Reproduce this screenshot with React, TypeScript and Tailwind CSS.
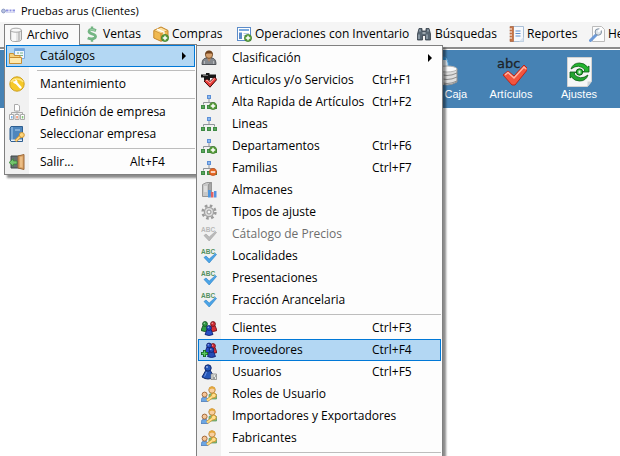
import { ReactNode } from "react"

type IconName =
  | "database" | "dollar" | "box" | "layout" | "binoculars" | "notebook" | "wrenchDoc"
  | "folder" | "wrench" | "company" | "book" | "door"
  | "person" | "articles" | "treeAdd" | "tree" | "treeRemove" | "server" | "gear"
  | "abcGray" | "abc" | "clients" | "suppliers" | "user" | "roles"

const plusBadge = (
  <>
    <circle cx="12" cy="12" r="3.6" fill="#5a9e3c" stroke="#3a7a26" strokeWidth=".7" />
    <path d="M12 9.8v4.4M9.8 12h4.4" stroke="#fff" strokeWidth="1.4" />
  </>
)

const treeBase = (
  <>
    <path d="M8 5v4M2.500 10.500V8.500h11v2" fill="none" stroke="#8f9499" strokeWidth="1" />
    <rect x="6.500" y="1.500" width="3" height="3" fill="#8db9f0" stroke="#5c8fd6" />
    <rect x=".5" y="11.500" width="3" height="3" fill="#58a65a" stroke="#3f8a45" />
    <rect x="6.500" y="11.500" width="3" height="3" fill="#58a65a" stroke="#3f8a45" />
    <rect x="12.500" y="11.500" width="3" height="3" fill="#58a65a" stroke="#3f8a45" />
  </>
)

function Pawn({ fill, dark, x = 0, y = 0 }: { fill: string; dark: string; x?: number; y?: number }) {
  return (
    <g transform={`translate(${x} ${y})`}>
      <path d="M2.500 4.500.5 9.500q4 2 8 0L6.500 4.500Z" fill={fill} stroke={dark} strokeWidth=".9" />
      <circle cx="4.500" cy="3" r="2.400" fill={fill} stroke={dark} strokeWidth=".9" />
      <circle cx="3.800" cy="2.300" r=".8" fill="#fff" opacity=".5" />
    </g>
  )
}

function AbcCheck({ text, line, fill }: { text: string; line: string; fill: string }) {
  return (
    <>
      <text x="0" y="6" fontSize="6.500" fontWeight="700" fontFamily="Liberation Sans, sans-serif" fill={text}>ABC</text>
      <path d="M3 9.500 5 8l3.200 3L14.500 5.500l1 1L8.200 15Z" fill={fill} stroke={line} strokeWidth=".6" />
    </>
  )
}

const icons: Record<IconName, ReactNode> = {
  database: (
    <>
      <path d="M2.500 3v9.500q0 2 5.500 2t5.500-2V3" fill="#e4e4e4" stroke="#a2a2a2" />
      <path d="M5 5v9M7 5v9" stroke="#fff" strokeWidth="1.500" />
      <path d="M11 5v9" stroke="#c4c4c4" strokeWidth="2" />
      <ellipse cx="8" cy="3.200" rx="5.500" ry="2" fill="#f8f8f8" stroke="#a9a9a9" />
    </>
  ),
  dollar: (
    <>
      <path d="M12 4.600Q8 2.800 5.600 4 3.600 6.500 8 7.800q5 1.400 3 4-3 2-7.300.2" fill="none" stroke="#74b583" strokeWidth="2.800" />
      <path d="M8 .5V3M8 13v2.800" stroke="#74b583" strokeWidth="2.400" />
      <path d="M11 4.300Q7.500 3.200 6 4.200" fill="none" stroke="#acd8b5" />
    </>
  ),
  box: (
    <>
      <path d="M.8 4.500 8 1l7 3.500v7.500L8 15.300.8 12Z" fill="#f0b950" stroke="#c4862b" />
      <path d="m1 4.500 7 3 6.800-3L8 1.200Z" fill="#ffe2a0" stroke="#c4862b" strokeWidth=".7" />
      <path d="M8 7.500V15" stroke="#c4862b" />
      <path d="m4 3.200 7 3v3" fill="none" stroke="#fff" strokeWidth="1.300" />
      {plusBadge}
    </>
  ),
  layout: (
    <>
      <rect x="1.500" y="1.500" width="13" height="13" fill="#fff" stroke="#5c8cc9" />
      <path d="M3 4h10" stroke="#7babdf" strokeWidth="2" />
      <path d="M3 6.500h3v6.500H3z" fill="#5c8cc9" />
      <path d="M7.500 7.500H13M7.500 9.500H13" stroke="#b6cbe4" />
      {plusBadge}
    </>
  ),
  binoculars: (
    <>
      <path d="M3 2.500h3V5h4V2.500h3L14.500 8v6H9.500V9.500h-3V14h-5V8Z" fill="#596773" stroke="#333e48" strokeWidth=".8" />
      <path d="M3 8.500v4.500M11 8.500v4.500M4 3.500v2M12 3.500v2" stroke="#a9b7c2" strokeWidth="1.200" />
      <path d="M6.500 7h3" stroke="#e0e5e8" />
    </>
  ),
  notebook: (
    <>
      <path d="M3.500.5h12v15h-12z" fill="#f6f9fd" stroke="#a9bed5" />
      <path d="M2 .5h3.500v15H2z" fill="#c87445" stroke="#a25a35" strokeWidth=".6" />
      <path d="M1 3h3M1 6h3M1 9h3M1 12h3" stroke="#fff" />
      <path d="M7.500 5h5M7.500 7.500h5M7.500 10h5" stroke="#5f91d0" />
      <path d="m11 15.500 4.500-4.500v4.500Z" fill="#d8e3ef" />
    </>
  ),
  wrenchDoc: (
    <>
      <path d="M3.500.5h9l3 3v12h-12z" fill="#fcfcfc" stroke="#bbb" />
      <path d="m1.500 14.500 6-6" stroke="#6e9bd8" strokeWidth="3" strokeLinecap="round" />
      <circle cx="9.300" cy="6" r="3.200" fill="#dce3ea" stroke="#8090a1" />
      <path d="m9.200 5.800 3-3" stroke="#fff" strokeWidth="2" />
    </>
  ),
  folder: (
    <>
      <path d="M5.500.5h10v10h-10z" fill="#edf5ff" stroke="#7ba8dc" />
      <path d="M6 2h9" stroke="#6fa3dc" strokeWidth="2" />
      <path d="M8 5h2M11 5h3M8 7.500h2M11 7.500h3" stroke="#79b387" />
      <path d="M.5 15.500v-10h4l1 2H11v8Z" fill="#f6d27d" stroke="#c98f32" />
      <path d="M.5 15.500v-6H12.500v6Z" fill="#ffe9ad" stroke="#c98f32" />
    </>
  ),
  wrench: (
    <>
      <circle cx="8" cy="8" r="7.200" fill="#f6c928" stroke="#cda022" />
      <path d="M2 6a6.500 5 0 0 1 12 0" fill="none" stroke="#ffe681" strokeWidth="1.500" />
      <path d="m6.500 6 5 5.500" stroke="#fff" strokeWidth="2.400" strokeLinecap="round" />
      <path d="M3.500 5q1.500 4 4 2.200T6.300 3l.3 2-1.400.7Z" fill="#fff" />
    </>
  ),
  company: (
    <>
      <path d="M8 7v3M2.500 10V8.500h11V10" fill="none" stroke="#aaa" />
      <path d="M5.500.5h3.500l1.500 1.500v5h-5z" fill="#fff" stroke="#aaa" />
      <path d="M.5 10.500h4v5h-4zM6 10.500h4v5H6zM11.500 10.500h4v5h-4z" fill="#fff" stroke="#aaa" />
      <path d="M2 12h1.500v2.500H2z" fill="#79b2ec" />
      <path d="M7.300 12h1.500v2.500H7.300z" fill="#f28c68" />
      <path d="M12.800 12h1.500v2.500h-1.500z" fill="#83c774" />
    </>
  ),
  book: (
    <>
      <path d="M2 .5h11.500v15H2l-1-2v-11Z" fill="#4e86bd" stroke="#2f5f91" />
      <path d="M3 1v12.500" stroke="#a9ceef" />
      <path d="M2 13.500h11v1.500H2z" fill="#e9f1fa" />
      <path d="M6 4h5" stroke="#b4d3ef" />
      <path d="m6.500 15 5-5" stroke="#d19633" strokeWidth="3" />
      <path d="m6.500 15 5-5" stroke="#ffd884" strokeWidth="1.500" />
      <circle cx="12.800" cy="9" r="2.500" fill="#ffd67b" stroke="#d19633" />
    </>
  ),
  door: (
    <>
      <path d="M2 2h11v12H2z" fill="#666f70" stroke="#414849" />
      <path d="m9 2 6-1.500v15L9 14Z" fill="#d8a062" stroke="#9b693a" />
      <path d="m11 3 2.500-.5v11L11 13Z" fill="#ebbd85" />
      <path d="M0 8.500 4.500 4.800V7H8v3H4.500v2.200Z" fill="#75c66e" stroke="#388337" strokeWidth=".7" />
    </>
  ),
  person: (
    <>
      <path d="M1 14.500q0-6 4-6.500h6q4 .5 4 6.500Z" fill="#85898e" stroke="#505358" />
      <path d="M6 8h4l-2 4Z" fill="#b88967" />
      <path d="M3.500 11v3M12.500 11v3" stroke="#b4b7bb" />
      <circle cx="8" cy="4.800" r="3.600" fill="#d5a06e" stroke="#684420" strokeWidth=".8" />
      <path d="M4.300 5Q4 .5 8 .5T11.700 5l-1-1.500h-5Z" fill="#70431e" />
    </>
  ),
  articles: (
    <>
      <path d="M0 2.500h5V1h3.500v1.500H15V6H9v2H3V5.500H0Z" fill="#161616" />
      <path d="M2 3.500h5" stroke="#707070" />
      <path d="M3 9 6 7l3.200 2.500 4.300-4.500 2.300 2.500L9 15.200Z" fill="#e63a36" stroke="#3c0808" />
      <path d="m5 8.800 1-.6 3 2.600 4.500-4.400" fill="none" stroke="#ffa09c" strokeWidth="1.100" />
    </>
  ),
  treeAdd: <>{treeBase}{plusBadge}</>,
  tree: treeBase,
  treeRemove: (
    <>
      {treeBase}
      <circle cx="12" cy="12" r="3.600" fill="#e56a28" stroke="#bd4b17" strokeWidth=".7" />
      <path d="M9.800 12h4.400" stroke="#fff" strokeWidth="1.400" />
    </>
  ),
  server: (
    <>
      <path d="m1.500 2.500 4-2h5l-3 2v12h-6Z" fill="#c8c8c8" stroke="#969696" />
      <path d="m7.500 2.500 3-2v12l-3 2Z" fill="#a7a7a7" stroke="#969696" />
      <path d="M3 5h3M3 7h3M3 9h3" stroke="#f4f4f4" />
      <path d="M7 8h2.800v7.500H7z" fill="#4d96df" />
      <path d="M10 10h2.500v5.500H10z" fill="#df6262" />
      <path d="M13 9h2.500v6.500H13z" fill="#5492e2" />
    </>
  ),
  gear: (
    <>
      <circle cx="8" cy="8" r="6.400" fill="none" stroke="#9a9a9a" strokeWidth="2.500" strokeDasharray="2.600 2.430" />
      <circle cx="8" cy="8" r="4.600" fill="#dcdcdc" stroke="#a2a2a2" strokeWidth="1.300" />
      <circle cx="8" cy="8" r="2" fill="#f5f5f5" stroke="#979797" />
    </>
  ),
  abcGray: <AbcCheck text="#b8b8b8" line="#a3a3a3" fill="#bababa" />,
  abc: <AbcCheck text="#549060" line="#267cc2" fill="#4ba5e8" />,
  clients: (
    <>
      <Pawn fill="#2f9d45" dark="#135522" x={-.5} y={1} />
      <Pawn fill="#d82d36" dark="#72151c" x={7.5} y={1} />
      <Pawn fill="#264fc4" dark="#101f70" x={3.5} y={5} />
    </>
  ),
  suppliers: (
    <>
      <Pawn fill="#d82d36" dark="#72151c" x={7.5} y={1} />
      <Pawn fill="#264fc4" dark="#101f70" x={3.5} y={.5} />
      <Pawn fill="#234ab5" dark="#101f70" x={6} y={5} />
      <path d="M3.500 8v7M0 11.500h7" stroke="#126326" strokeWidth="3" />
      <path d="M3.500 8.800v5.400M.8 11.500h5.400" stroke="#58cc5e" strokeWidth="1.300" />
    </>
  ),
  user: (
    <>
      <path d="m5 6-4 7q6 4 12 0L9 6Z" fill="#2456b8" stroke="#12296b" />
      <path d="m5.500 8-2 4.500" stroke="#7197e6" />
      <circle cx="7" cy="4" r="3.200" fill="#2456b8" stroke="#12296b" />
      <circle cx="6" cy="3" r="1" fill="#91aee9" />
      <path d="M10 10h5.500v5.500H10z" fill="#e6e9e5" stroke="#777" strokeWidth=".7" />
      <path d="M11.500 12h1M14 12h.8M11.500 14H14" stroke="#555" />
    </>
  ),
  roles: (
    <>
      <path d="M8 8.500q4-3 7.500 0V13H8Z" fill="#80bf79" stroke="#55935a" strokeWidth=".7" />
      <circle cx="11" cy="4" r="3.200" fill="#f8cf9f" stroke="#bd883d" />
      <path d="M8 3.500Q8 .4 11 .5t3.500 3L11 2.500Z" fill="#e3a73c" />
      <path d="M0 15.500q0-4.500 3.500-4.500T7 15.500Z" fill="#6ca6e4" stroke="#4171b0" strokeWidth=".7" />
      <circle cx="3.600" cy="8.600" r="2.500" fill="#f5c698" stroke="#a46b3d" />
      <path d="m6 14.500 5.500-4" stroke="#d09532" strokeWidth="3" />
      <circle cx="12.800" cy="9.500" r="2.400" fill="#ffe08b" stroke="#d09532" />
      <path d="m6 14.500 5.500-4" stroke="#ffe08b" strokeWidth="1.700" />
    </>
  ),
}

function Icon({ name }: { name: IconName }) {
  return (
    <svg className="size-4 shrink-0" viewBox="0 0 16 16" aria-hidden="true">
      {icons[name]}
    </svg>
  )
}

type Entry = { label: string; icon: IconName; shortcut?: string; disabled?: boolean; active?: boolean; arrow?: boolean }

const catalogGroups: Entry[][] = [
  [
    { label: "Clasificación", icon: "person", arrow: true },
    { label: "Articulos y/o Servicios", icon: "articles", shortcut: "Ctrl+F1" },
    { label: "Alta Rapida de Artículos", icon: "treeAdd", shortcut: "Ctrl+F2" },
    { label: "Lineas", icon: "tree" },
    { label: "Departamentos", icon: "treeAdd", shortcut: "Ctrl+F6" },
    { label: "Familias", icon: "treeRemove", shortcut: "Ctrl+F7" },
    { label: "Almacenes", icon: "server" },
    { label: "Tipos de ajuste", icon: "gear" },
    { label: "Cátalogo de Precios", icon: "abcGray", disabled: true },
    { label: "Localidades", icon: "abc" },
    { label: "Presentaciones", icon: "abc" },
    { label: "Fracción Arancelaria", icon: "abc" },
  ],
  [
    { label: "Clientes", icon: "clients", shortcut: "Ctrl+F3" },
    { label: "Proveedores", icon: "suppliers", shortcut: "Ctrl+F4", active: true },
    { label: "Usuarios", icon: "user", shortcut: "Ctrl+F5" },
    { label: "Roles de Usuario", icon: "roles" },
    { label: "Importadores y Exportadores", icon: "roles" },
    { label: "Fabricantes", icon: "roles" },
  ],
]

const menuBar: { label: string; icon: IconName; width: string }[] = [
  { label: "Ventas", icon: "dollar", width: "w-[69px]" },
  { label: "Compras", icon: "box", width: "w-[83px]" },
  { label: "Operaciones con Inventario", icon: "layout", width: "w-[180px]" },
  { label: "Búsquedas", icon: "binoculars", width: "w-[92px]" },
  { label: "Reportes", icon: "notebook", width: "w-[81px]" },
  { label: "Herramientas", icon: "wrenchDoc", width: "w-[110px]" },
]

function Separator() {
  return (
    <li role="separator" className="flex h-1.5 items-center pl-[31px]">
      <span className="h-px flex-1 bg-[#bdbdbd]" />
    </li>
  )
}

function MenuRow({ entry, shortcutWidth }: { entry: Entry; shortcutWidth: string }) {
  return (
    <button
      type="button"
      disabled={entry.disabled}
      className={`flex h-[22px] w-full items-center border pl-0.5 text-left ${
        entry.active ? "border-[#0078d7] bg-[#b3d7f3]" : "border-transparent"
      } ${entry.disabled ? "text-[#6d6d6d]" : "text-black"}`}
    >
      <Icon name={entry.icon} />
      <span className="ml-[15px] flex-1 whitespace-nowrap">{entry.label}</span>
      {entry.shortcut && <kbd className={`font-[inherit] ${shortcutWidth}`}>{entry.shortcut}</kbd>}
      {entry.arrow && (
        <svg className="mr-2 h-2 w-1" viewBox="0 0 4 8" aria-hidden="true">
          <path d="M0 0v8l4-4Z" fill="#000" />
        </svg>
      )}
    </button>
  )
}

const popup =
  "absolute border border-[#808080] bg-[linear-gradient(to_right,#f1f1f1_24px,#fdfdfd_24px)] px-px shadow-[3px_3px_2px_rgba(0,0,0,0.45)]"

function CatalogMenu() {
  return (
    <ul className={`${popup} left-[190px] top-0 z-10 w-[247px] pb-8 pt-px`}>
      {catalogGroups.map((group, index) => (
        <li key={index}>
          <ul>
            {group.map((entry) => (
              <li key={entry.label}>
                <MenuRow entry={entry} shortcutWidth="w-[68px]" />
              </li>
            ))}
            <Separator />
          </ul>
        </li>
      ))}
    </ul>
  )
}

function FileMenu() {
  return (
    <ul className={`${popup} -left-px top-[19px] w-[193px] pb-px`}>
      <li className="relative">
        <MenuRow entry={{ label: "Catálogos", icon: "folder", active: true, arrow: true }} shortcutWidth="" />
        <CatalogMenu />
      </li>
      <Separator />
      <li><MenuRow entry={{ label: "Mantenimiento", icon: "wrench" }} shortcutWidth="" /></li>
      <Separator />
      <li><MenuRow entry={{ label: "Definición de empresa", icon: "company" }} shortcutWidth="" /></li>
      <li><MenuRow entry={{ label: "Seleccionar empresa", icon: "book" }} shortcutWidth="" /></li>
      <Separator />
      <li><MenuRow entry={{ label: "Salir...", icon: "door", shortcut: "Alt+F4" }} shortcutWidth="w-16" /></li>
    </ul>
  )
}

function ToolButton({ label, children }: { label: string; children: ReactNode }) {
  return (
    <button type="button" className="flex w-[68px] flex-col items-center pt-1.5 font-['Liberation_Sans',sans-serif] text-[11px] leading-3 text-white">
      <svg className="size-8" viewBox="0 0 32 32" aria-hidden="true">{children}</svg>
      <span className="whitespace-nowrap">{label}</span>
    </button>
  )
}

function App() {
  return (
    <div className="h-screen overflow-hidden bg-white font-['Open_Sans','Noto_Sans',sans-serif] text-[12px] leading-4 text-black">
      <header className="flex h-[22px] items-center gap-1.5 pl-px">
        <svg className="h-2 w-3.5" viewBox="0 0 14 8" aria-hidden="true">
          <circle cx="2.500" cy="4" r="1.900" fill="#b9c3e2" stroke="#8e9bc5" />
          <path d="M5 3.500h2.500M8.500 3.500h2M11.500 3.500H14" stroke="#8d91e0" strokeWidth="2" />
          <path d="M5 5.500h9" stroke="#d5d8f3" />
        </svg>
        <h1 className="text-[11px]">Pruebas arus (Clientes)</h1>
      </header>

      <nav className="flex h-[27px] border-b-2 border-[#8c8c8c] bg-[#f5f5f5] pl-1 pt-0.5">
        <div className="relative z-10 h-[22px] w-[76px] shrink-0 border border-b-0 border-[#808080] bg-[#fafafa]">
          <FileMenu />
          <button type="button" className="relative flex h-5 w-full items-center gap-[3px] bg-[#fafafa] pl-[3px]">
            <Icon name="database" />
            Archivo
          </button>
        </div>
        {menuBar.map((item) => (
          <button
            key={item.label}
            type="button"
            className={`flex h-5 shrink-0 items-center gap-[3px] whitespace-nowrap pl-1 ${item.width}`}
          >
            <Icon name={item.icon} />
            {item.label}
          </button>
        ))}
      </nav>

      <div className="mt-px flex h-[58px] items-start bg-[#4682b4] pl-[409px]">
        <ToolButton label="Ent / Caja">
          <path d="M13 5q1-4 4-4t4 6v8h-8Z" fill="#e9f4fc" stroke="#58a7df" />
          <path d="M16 1h3v3h-3z" fill="#3b9be0" />
          <path d="M10 13v13q10 6 20 0V13Z" fill="#dedede" stroke="#929292" />
          <path d="M10 17q10 5 20 0M10 21q10 5 20 0M10 25q10 5 20 0" fill="none" stroke="#8c8c8c" />
          <path d="M13 16v12M16 17v12" stroke="#fff" strokeWidth="1.500" opacity=".7" />
          <ellipse cx="20" cy="13" rx="10" ry="3" fill="#fafafa" stroke="#b5b5b5" />
        </ToolButton>
        <ToolButton label="Artículos">
          <text x="2" y="12" fontSize="13" fontFamily="DejaVu Sans, sans-serif" fill="#1e2429" stroke="#1e2429" strokeWidth=".3">abc</text>
          <path d="m8 19 5-4 6 5L29 9l4 4-13 16h-3Z" fill="#f4553e" stroke="#bc2418" />
          <path d="m10 19 3-2.500 6 5.500L29 11l2 2" fill="none" stroke="#ffb6a3" strokeWidth="1.500" />
        </ToolButton>
        <ToolButton label="Ajustes">
          <path d="M4.500 1.500h24v24l-4 5h-20z" fill="#f6f6f6" stroke="#d2d2d2" />
          <path d="m24.500 30.500 4-5h-4Z" fill="#cfd3d6" />
          <path d="M8 13Q10 7 16.500 7q5 0 8 4l1.500-1v6h-6l2-2q-6-7-14-1Z" fill="#23b52f" stroke="#0b5c14" strokeWidth=".8" />
          <path d="M25 19q-2 6-8.500 6-5 0-8-4L7 22v-6h6l-2 2q6 7 14 1Z" fill="#23a52f" stroke="#0b5c14" strokeWidth=".8" />
          <circle cx="16.500" cy="16" r="3.200" fill="#2eb83a" stroke="#0b5c14" />
          <path d="M15.500 14.500h2v3h-2z" fill="#d9f5d9" />
        </ToolButton>
      </div>
    </div>
  )
}

export default App
